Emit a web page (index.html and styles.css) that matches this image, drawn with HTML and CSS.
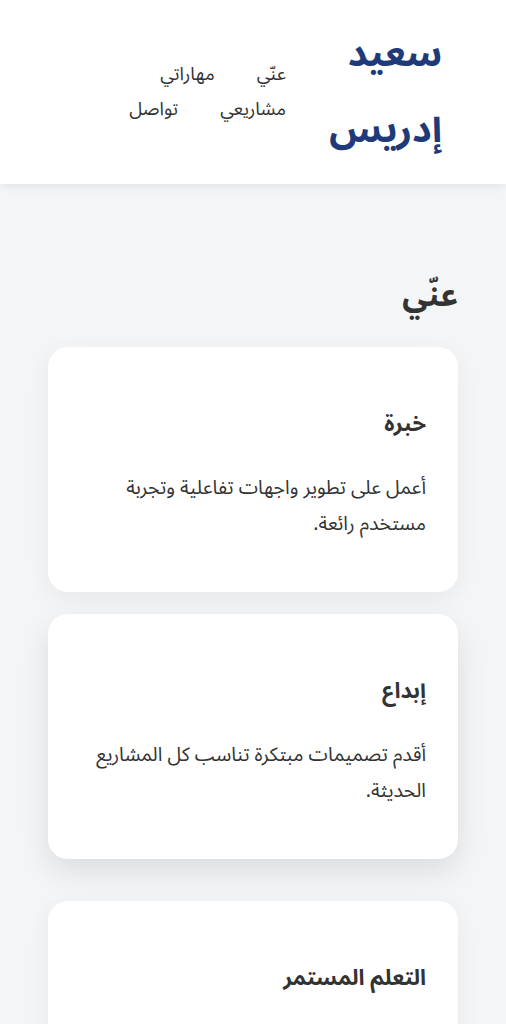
FILE: index.html
```html
<!DOCTYPE html>
<html lang="ar" dir="rtl">
<head>
<meta charset="utf-8">
<meta name="viewport" content="width=device-width, initial-scale=1">
<title>سعيد إدريس</title>
<link rel="stylesheet" href="styles.css">
</head>
<body>
<header class="site-header">
  <div class="logo">سعيد إدريس</div>
  <nav class="nav">
    <a href="#about">عنّي</a>
    <a href="#skills">مهاراتي</a>
    <a href="#projects">مشاريعي</a>
    <a href="#contact">تواصل</a>
  </nav>
</header>
<main class="main">
  <section class="section" id="about">
    <h2 class="section-title">عنّي</h2>
    <div class="cards">
      <div class="card">
        <h3 class="card-title">خبرة</h3>
        <p class="card-text">أعمل على تطوير واجهات تفاعلية وتجربة مستخدم رائعة.</p>
      </div>
      <div class="card card-raised">
        <h3 class="card-title">إبداع</h3>
        <p class="card-text">أقدم تصميمات مبتكرة تناسب كل المشاريع الحديثة.</p>
      </div>
      <div class="card">
        <h3 class="card-title">التعلم المستمر</h3>
        <p class="card-text">أحرص على تطوير مهاراتي باستمرار ومواكبة كل جديد.</p>
      </div>
    </div>
  </section>
</main>
</body>
</html>
```
FILE: styles.css
```css
* { box-sizing: border-box; }
html, body { margin: 0; padding: 0; }
body {
  font-family: "Noto Sans Arabic", "DejaVu Sans", sans-serif;
  background: #f4f5f7;
  color: #333;
  line-height: 2;
}
.site-header {
  background: #fff;
  display: flex;
  align-items: center;
  justify-content: space-between;
  padding: 16px 64px;
  box-shadow: 0 2px 10px rgba(0,0,0,0.08);
  position: relative;
}
.logo {
  font-size: 38px;
  font-weight: 700;
  color: #1e3a78;
  width: 112px;
  line-height: 76px;
}
.nav {
  flex: 1;
  display: flex;
  flex-wrap: wrap;
  column-gap: 42px;
  margin-right: 44px;
}
.nav a {
  color: #333;
  text-decoration: none;
  font-size: 18.5px;
  line-height: 35px;
}
.main { padding: 80px 48px 40px; }
.section-title {
  font-size: 32px;
  font-weight: 700;
  margin: 0 0 19px;
  line-height: 2;
}
.cards {
  display: flex;
  flex-direction: column;
  gap: 32px;
}
.card {
  background: #fff;
  border-radius: 20px;
  padding: 32px;
  box-shadow: 0 6px 24px rgba(0,0,0,0.06);
}
.card-raised {
  transform: translateY(-10px);
  box-shadow: 0 12px 30px rgba(0,0,0,0.1);
}
.card-title {
  font-size: 22px;
  font-weight: 700;
  margin: 23px 0 24px;
  line-height: 2;
}
.card-text {
  font-size: 19.5px;
  margin: 0 0 18px;
  line-height: 36px;
}
```
